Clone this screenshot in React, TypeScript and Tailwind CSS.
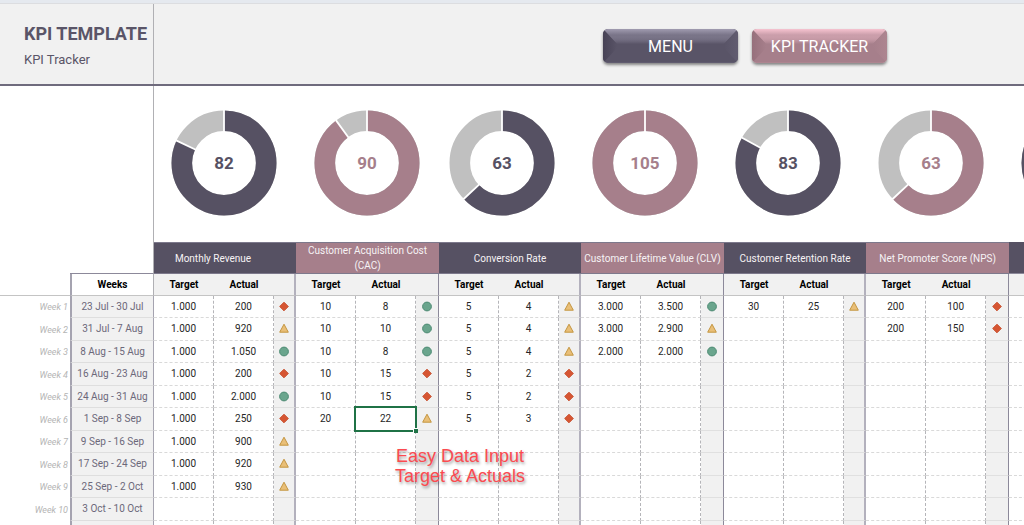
import clsx from 'clsx';

type Status = 'good' | 'near' | 'bad';
type Entry = [target: string, actual: string, status: Status];
type Tone = 'dark' | 'rose';

type Kpi = {
  name: string;
  score: number;
  tone: Tone;
  headClass?: string;
  entries: Entry[];
};

const KPIS: Kpi[] = [
  {
    name: 'Monthly Revenue',
    score: 82,
    tone: 'dark',
    headClass: 'pr-6',
    entries: [
      ['1.000', '200', 'bad'],
      ['1.000', '920', 'near'],
      ['1.000', '1.050', 'good'],
      ['1.000', '200', 'bad'],
      ['1.000', '2.000', 'good'],
      ['1.000', '250', 'bad'],
      ['1.000', '900', 'near'],
      ['1.000', '920', 'near'],
      ['1.000', '930', 'near'],
    ],
  },
  {
    name: 'Customer Acquisition Cost (CAC)',
    score: 90,
    tone: 'rose',
    headClass: 'px-2',
    entries: [
      ['10', '8', 'good'],
      ['10', '10', 'good'],
      ['10', '8', 'good'],
      ['10', '15', 'bad'],
      ['10', '15', 'bad'],
      ['20', '22', 'near'],
    ],
  },
  {
    name: 'Conversion Rate',
    score: 63,
    tone: 'dark',
    entries: [
      ['5', '4', 'near'],
      ['5', '4', 'near'],
      ['5', '4', 'near'],
      ['5', '2', 'bad'],
      ['5', '2', 'bad'],
      ['5', '3', 'bad'],
    ],
  },
  {
    name: 'Customer Lifetime Value (CLV)',
    score: 105,
    tone: 'rose',
    entries: [
      ['3.000', '3.500', 'good'],
      ['3.000', '2.900', 'near'],
      ['2.000', '2.000', 'good'],
    ],
  },
  {
    name: 'Customer Retention Rate',
    score: 83,
    tone: 'dark',
    entries: [['30', '25', 'near']],
  },
  {
    name: 'Net Promoter Score (NPS)',
    score: 63,
    tone: 'rose',
    entries: [
      ['200', '100', 'bad'],
      ['200', '150', 'bad'],
    ],
  },
];

const WEEKS = [
  '23 Jul - 30 Jul',
  '31 Jul - 7 Aug',
  '8 Aug - 15 Aug',
  '16 Aug - 23 Aug',
  '24 Aug - 31 Aug',
  '1 Sep - 8 Sep',
  '9 Sep - 16 Sep',
  '17 Sep - 24 Sep',
  '25 Sep - 2 Oct',
  '3 Oct - 10 Oct',
];

const SELECTED = { week: 5, kpi: 1 };

const FILL = { dark: '#565163', rose: '#a67f8b' };

const StatusIcon = ({ status }: { status: Status }) => (
  <svg className="mx-auto block size-3" viewBox="0 0 12 12" role="img" aria-label={status}>
    {status === 'good' && <circle cx="6" cy="5.5" r="4.4" fill="#6aa58d" stroke="#4b8a72" />}
    {status === 'near' && (
      <path d="M6 1.2 10.3 9.2H1.7Z" fill="#e9bf78" stroke="#c4953f" strokeLinejoin="round" />
    )}
    {status === 'bad' && (
      <path d="M6 1.2 10.3 5.5 6 9.8 1.7 5.5Z" fill="#d65532" stroke="#c8502f" strokeLinejoin="round" />
    )}
  </svg>
);

const point = (fraction: number, radius: number) => {
  const angle = fraction * 2 * Math.PI;
  return `${53 + radius * Math.sin(angle)} ${53 - radius * Math.cos(angle)}`;
};

const Donut = ({ score, tone }: { score?: number; tone: Tone }) => {
  const share = Math.min(score ?? 100, 100) / 100;
  return (
    <svg className="size-[106px] shrink-0 font-bold" viewBox="0 0 106 106">
      <circle cx="53" cy="53" r="42.2" fill="none" stroke="#c0c0c0" strokeWidth="20.6" />
      <circle
        cx="53"
        cy="53"
        r="42.2"
        fill="none"
        stroke={FILL[tone]}
        strokeWidth="20.6"
        pathLength="100"
        strokeDasharray={`${share * 100} 100`}
        transform="rotate(-90 53 53)"
      />
      <path
        d={`M${point(0, 30)}L${point(0, 53)}M${point(share, 30)}L${point(share, 53)}`}
        stroke="#fff"
        strokeWidth="1.8"
      />
      {score !== undefined && (
        <text x="53" y="59" textAnchor="middle" fontSize="17" fill={FILL[tone]}>
          {score}
        </text>
      )}
    </svg>
  );
};

const BEVEL = {
  dark: { base: '#595467', top: '#a09bb0', side: '#615c70', low: '#474255' },
  rose: { base: '#a67f8b', top: '#f6c3d0', side: '#ad8590', low: '#96707c' },
};

const BevelButton = ({ label, tone }: { label: string; tone: Tone }) => {
  const c = BEVEL[tone];
  return (
    <button
      type="button"
      className="relative h-[34px] w-[135px] shrink-0 overflow-hidden rounded-[5px] pt-0.5
        text-base text-white shadow-[0_2px_3px_rgba(0,0,0,0.45)]"
    >
      <svg
        className="absolute inset-0 size-full"
        viewBox="0 0 135 34"
        preserveAspectRatio="none"
        aria-hidden="true"
      >
        <defs>
          <linearGradient id={`top-${tone}`} x1="0" y1="0" x2="0" y2="1">
            <stop offset="0" stopColor={c.top} />
            <stop offset="0.4" stopColor={c.top} stopOpacity="0.45" />
            <stop offset="1" stopColor={c.base} />
          </linearGradient>
          <linearGradient id={`side-${tone}`} x1="0" y1="0" x2="1" y2="0">
            <stop offset="0" stopColor={c.low} />
            <stop offset="1" stopColor={c.base} />
          </linearGradient>
          <linearGradient id={`end-${tone}`} x1="0" y1="0" x2="1" y2="0">
            <stop offset="0" stopColor={c.base} />
            <stop offset="1" stopColor={c.side} />
          </linearGradient>
        </defs>
        <rect width="135" height="34" fill={c.base} />
        <path d="M0 0H135L121 15H14Z" fill={`url(#top-${tone})`} />
        <path d="M0 0 14 15V19L0 34Z" fill={`url(#side-${tone})`} />
        <path d="M135 0 121 15V19L135 34Z" fill={`url(#end-${tone})`} />
        <path d="M0 33.5H135" stroke={c.side} />
      </svg>
      <span className="relative">{label}</span>
    </button>
  );
};

const edge = (tone: Tone) =>
  tone === 'dark' ? 'border-r-2 border-r-[#b3b1bd]' : 'border-r border-r-[#8c899a]';

const KpiCells = ({ kpi, week }: { kpi: Kpi; week: number }) => {
  const [target, actual, status] = kpi.entries[week] ?? [];
  const selected = week === SELECTED.week && KPIS[SELECTED.kpi] === kpi;
  const cell = 'border-b border-dashed border-b-[#d9d9d9] border-r border-r-[#b5b5b9] p-0';
  return (
    <>
      <td className={cell}>{target}</td>
      <td className={clsx(cell, selected && 'relative')}>
        {actual}
        {selected && (
          <span className="absolute -inset-x-[2px] -inset-y-[2px] border-2 border-[#1f7246]">
            <span
              className="absolute -right-[3px] -bottom-[3px] size-[5px] border-t border-l
                border-white bg-[#1f7246]"
            />
          </span>
        )}
      </td>
      <td className={clsx('border-b border-b-[#e0e0e0] bg-[#f1f1f1] p-0', edge(kpi.tone))}>
        {status && <StatusIcon status={status} />}
      </td>
    </>
  );
};

const Tracker = () => (
  <table
    className="w-[1151px] table-fixed border-separate border-spacing-0 text-center text-[10px]
      leading-3 text-[#262626]"
  >
    <colgroup>
      <col className="w-[70px]" />
      <col className="w-[84px]" />
      {KPIS.map((kpi) => [
        <col key={`${kpi.name}-target`} className="w-[60px]" />,
        <col key={`${kpi.name}-actual`} className="w-[60px]" />,
        <col
          key={`${kpi.name}-status`}
          className={kpi.tone === 'dark' ? 'w-[22px]' : 'w-[23px]'}
        />,
      ])}
      <col className="w-[142px]" />
    </colgroup>
    <thead>
      <tr className="h-[31px]">
        <td />
        <td className="border-r border-b border-r-[#b0b0b4] border-b-[#8c899a]" />
        {KPIS.map((kpi) => (
          <th
            key={kpi.name}
            colSpan={3}
            scope="colgroup"
            className={clsx(
              'border-y border-y-[#7d798c] py-0 leading-[15px] font-normal text-[#f6f3f5]',
              kpi.tone === 'dark' ? 'bg-[#565163]' : 'bg-[#a67f8b]',
              kpi.headClass ?? 'px-0'
            )}
          >
            {kpi.name}
          </th>
        ))}
        <td className="border-b border-b-[#8c899a] bg-[#565163]" />
      </tr>
      <tr className="h-[22px] text-black">
        <td className="border-b border-b-[#c4c4c4]" />
        <th
          scope="col"
          className="border-r border-b border-l-2 border-r-[#b0b0b4] border-b-[#c4c4c4]
            border-l-[#a5a3b0] p-0"
        >
          Weeks
        </th>
        {KPIS.map((kpi) => [
          <th
            key={`${kpi.name}-target`}
            scope="col"
            className="border-b border-b-[#c4c4c4] bg-[#f1f1f1] p-0"
          >
            Target
          </th>,
          <th
            key={`${kpi.name}-actual`}
            scope="col"
            className="border-b border-b-[#c4c4c4] bg-[#f1f1f1] p-0"
          >
            Actual
          </th>,
          <td
            key={`${kpi.name}-status`}
            className={clsx('border-b border-b-[#c4c4c4] bg-[#f1f1f1]', edge(kpi.tone))}
          />,
        ])}
        <td className="border-b border-b-[#c4c4c4] bg-[#f1f1f1]" />
      </tr>
    </thead>
    <tbody>
      {WEEKS.map((dates, week) => (
        <tr key={dates} className="odd:h-[22px] even:h-[23px]">
          <th
            scope="row"
            className="p-0 pr-[2px] text-right text-[9px] font-normal text-[#b4b4b4] italic"
          >
            Week {week + 1}
          </th>
          <td
            className="border-r border-b border-l-2 border-r-[#a5a3b0] border-b-[#dedede]
              border-l-[#a5a3b0] bg-[#f1f1f1] p-0 text-[#6c687a]"
          >
            {dates}
          </td>
          {KPIS.map((kpi) => (
            <KpiCells key={kpi.name} kpi={kpi} week={week} />
          ))}
          <td className="border-b border-dashed border-b-[#d9d9d9]" />
        </tr>
      ))}
      <tr className="h-[22px]">
        <td />
        <td className="border-r border-l-2 border-r-[#a5a3b0] border-l-[#a5a3b0] bg-[#f1f1f1]" />
        {KPIS.map((kpi) => (
          <KpiCells key={kpi.name} kpi={kpi} week={WEEKS.length} />
        ))}
        <td />
      </tr>
    </tbody>
  </table>
);

const App = () => (
  <div
    className="h-screen overflow-hidden bg-white
      font-[Roboto,'Liberation_Sans',sans-serif]"
  >
    <div className="h-1 border-b border-[#dcdde0] bg-[#e5e9ef]" />
    <header className="flex h-[82px] border-b-2 border-[#6f6b7d] bg-[#f1f1f1] text-[#5a5568]">
      <div className="w-[154px] shrink-0 border-r border-[#b0b0b4] pt-[18px] pl-6 whitespace-nowrap">
        <h1 className="text-lg leading-6 font-bold">KPI TEMPLATE</h1>
        <p className="pt-1 text-[13px] leading-5">KPI Tracker</p>
      </div>
      <nav className="flex gap-[14px] pt-[25px] pl-[449px]">
        <BevelButton label="MENU" tone="dark" />
        <BevelButton label="KPI TRACKER" tone="rose" />
      </nav>
    </header>
    <main className="relative">
      <section className="flex h-[156px]" aria-label="Scores">
        <div className="w-[154px] shrink-0 border-r border-[#b0b0b4]" />
        <div className="flex gap-[29px] pt-6 pl-[17px]">
          <div className="flex gap-[37px]">
            {KPIS.slice(0, 2).map((kpi) => (
              <Donut key={kpi.name} score={kpi.score} tone={kpi.tone} />
            ))}
          </div>
          <div className="flex gap-[37px]">
            {KPIS.slice(2).map((kpi) => (
              <Donut key={kpi.name} score={kpi.score} tone={kpi.tone} />
            ))}
            <Donut tone="dark" />
          </div>
        </div>
      </section>
      <Tracker />
      <p
        className="absolute top-[360px] left-[395px] text-center
          font-['Liberation_Sans',Arial,sans-serif] text-lg leading-5 whitespace-nowrap
          text-[#fb4a50] [text-shadow:1px_2px_3px_rgba(0,0,0,0.4)]"
      >
        Easy Data Input
        <br />
        Target &amp; Actuals
      </p>
    </main>
  </div>
);

export default App;
